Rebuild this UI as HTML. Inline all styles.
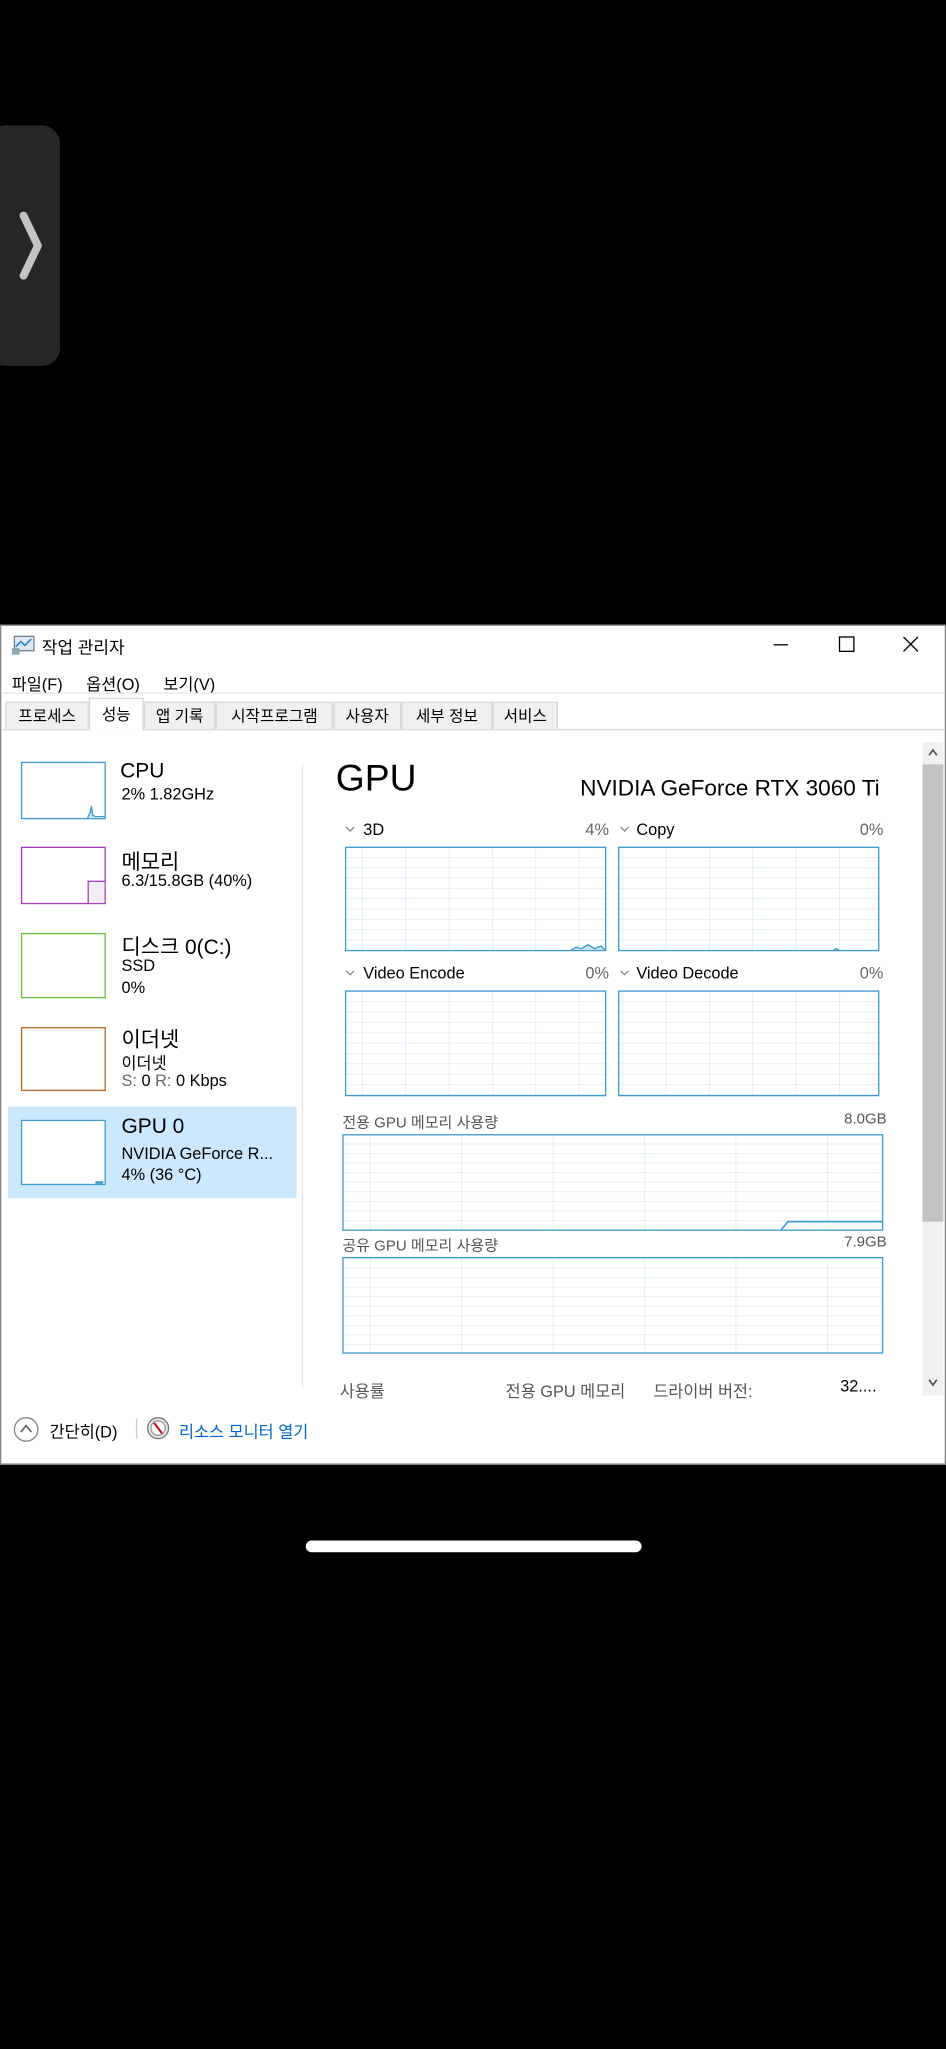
<!DOCTYPE html>
<html><head><meta charset="utf-8"><style>
html,body{margin:0;padding:0;background:#000;width:946px;height:2048px;overflow:hidden}
#s{position:absolute;left:0;top:0;width:724px;height:1568px;transform:scale(1.30663);transform-origin:0 0;font-family:"Liberation Sans","Noto Sans CJK KR",sans-serif;color:#000}
.a{position:absolute;white-space:nowrap}
.win{position:absolute;left:0;top:478px;width:722px;height:641px;background:#fff;border:1px solid #888}
.tab{position:absolute;top:537px;height:21px;font-size:12px;line-height:21px;text-align:center;background:#f0f0f0;border:1px solid #d9d9d9;border-bottom:none;box-sizing:border-box}
.th{position:absolute;left:16px;width:65px;box-sizing:border-box;border:1px solid;background:#fff}
.t1{font-size:16px}.t2{font-size:12.5px}
.lab{font-size:12.5px;color:#000}
.gray{color:#666}
</style></head><body><div id="s">
<div style="position:absolute;left:-10px;top:96px;width:56px;height:184px;background:#262626;border-radius:14px"></div>
<svg class="a" style="left:0;top:0" width="60" height="300"><polyline points="18,165 29,188 18,211" fill="none" stroke="#c4c4c8" stroke-width="6" stroke-linecap="round" stroke-linejoin="round"/></svg>

<div class="win"></div>
<svg class="a" style="left:9px;top:486px" width="18" height="16"><rect x="2" y="1" width="15" height="11" fill="#dfe8f0" stroke="#6a7f94"/><polyline points="3,9 7,5 10,8 15,3" fill="none" stroke="#2a8ad0" stroke-width="1.3"/><rect x="0" y="10" width="6" height="5" fill="#8aa"/></svg>
<div class="a" style="left:32px;top:485px;font-size:13px">작업 관리자</div>
<div class="a" style="left:592px;top:493px;width:11px;height:1px;background:#000"></div>
<div class="a" style="left:642px;top:487px;width:10px;height:10px;border:1px solid #000"></div>
<svg class="a" style="left:691px;top:487px" width="12" height="12"><path d="M0.5 0.5L11.5 11.5M11.5 0.5L0.5 11.5" stroke="#000" stroke-width="1"/></svg>
<div class="a" style="left:9px;top:513px;font-size:12.5px">파일(F)</div>
<div class="a" style="left:66px;top:513px;font-size:12.5px">옵션(O)</div>
<div class="a" style="left:125px;top:513px;font-size:12.5px">보기(V)</div>
<div class="a" style="left:1px;top:530px;width:722px;height:1px;background:#e5e5e5"></div>
<div class="a" style="left:1px;top:558px;width:722px;height:1px;background:#d9d9d9"></div>
<div class="tab" style="left:4px;width:64px">프로세스</div>
<div class="tab" style="left:68px;width:42px;top:534px;height:25px;background:#fff;line-height:24px">성능</div>
<div class="tab" style="left:110px;width:55px">앱 기록</div>
<div class="tab" style="left:165px;width:90px">시작프로그램</div>
<div class="tab" style="left:255px;width:52px">사용자</div>
<div class="tab" style="left:307px;width:70px">세부 정보</div>
<div class="tab" style="left:377px;width:50px">서비스</div>

<div class="a" style="left:231px;top:585px;width:1px;height:477px;background:#e3e3e3"></div>
<div class="th" style="top:583px;height:44px;border-color:#3c9bd0"><svg width="63" height="42" style="position:absolute;left:0;top:0"><polyline points="50,42 52,38 53,33 54,40 56,41 63,41" fill="#cde4f3" stroke="#3c9bd0"/></svg></div>
<div class="a t1" style="left:92px;top:582px">CPU</div>
<div class="a t2" style="left:93px;top:601px">2% 1.82GHz</div>
<div class="th" style="top:648px;height:44px;border-color:#a53cc0"><div style="position:absolute;right:0;bottom:0;width:12px;height:16px;border-left:1px solid #a53cc0;border-top:1px solid #a53cc0;background:#f0eef2"></div></div>
<div class="a t1" style="left:93px;top:646px">메모리</div>
<div class="a t2" style="left:93px;top:667px">6.3/15.8GB (40%)</div>
<div class="th" style="top:714px;height:50px;border-color:#6abf3d"></div>
<div class="a t1" style="left:93px;top:711px">디스크 0(C:)</div>
<div class="a t2" style="left:93px;top:732px">SSD</div>
<div class="a t2" style="left:93px;top:749px">0%</div>
<div class="th" style="top:786px;height:49px;border-color:#b86a2a"></div>
<div class="a t1" style="left:93px;top:782px">이더넷</div>
<div class="a t2" style="left:93px;top:803px">이더넷</div>
<div class="a t2" style="left:93px;top:820px"><span class="gray">S:</span> 0 <span class="gray">R:</span> 0 Kbps</div>
<div class="a" style="left:6px;top:847px;width:221px;height:70px;background:#cce8ff"></div>
<div class="th" style="top:857px;height:50px;border-color:#3c9bd0"><div style="position:absolute;right:1px;bottom:0;width:6px;height:2px;background:#3c9bd0"></div></div>
<div class="a t1" style="left:93px;top:854px">GPU 0</div>
<div class="a t2" style="left:93px;top:876px">NVIDIA GeForce R...</div>
<div class="a t2" style="left:93px;top:892px">4% (36 °C)</div>

<div class="a" style="left:257px;top:580px;font-size:28.5px">GPU</div>
<div class="a" style="left:444px;top:593px;font-size:17.3px">NVIDIA GeForce RTX 3060 Ti</div>

<svg class="a" style="left:0;top:0" width="724" height="1100">
<defs>
<pattern id="g1" width="33.2" height="7.9" patternUnits="userSpaceOnUse" x="277" y="648"><path d="M0 0V7.9M0 0H33.2" stroke="#d6e8f5" stroke-width="1" fill="none"/></pattern>
<pattern id="g2" width="70" height="7.3" patternUnits="userSpaceOnUse" x="283" y="868"><path d="M0 0V7.3M0 0H70" stroke="#d6e8f5" stroke-width="1" fill="none"/></pattern>
</defs>
<g fill="url(#g1)" stroke="#3c9bd0" stroke-width="1">
<rect x="264.5" y="648.5" width="199" height="79"/>
<rect x="473.5" y="648.5" width="199" height="79"/>
<rect x="264.5" y="758.5" width="199" height="80"/>
<rect x="473.5" y="758.5" width="199" height="80"/>
</g>
<g fill="url(#g2)" stroke="#3c9bd0" stroke-width="1">
<rect x="262.5" y="868.5" width="413" height="73"/>
<rect x="262.5" y="962.5" width="413" height="73"/>
</g>
<polyline points="437,727 441,725 445,726 450,723 455,726 460,724 463,727" fill="#cde4f3" stroke="#3c9bd0"/>
<polyline points="638,727 640,726 642,727" fill="none" stroke="#3c9bd0"/>
<polyline points="598,941 603,935 676,935" fill="none" stroke="#3c9bd0" stroke-width="1.2"/>
<g fill="none" stroke="#888" stroke-width="1"><polyline points="265,633 268,636 271,633"/><polyline points="475,633 478,636 481,633"/><polyline points="265,743 268,746 271,743"/><polyline points="475,743 478,746 481,743"/></g>
</svg>
<div class="a lab" style="left:278px;top:628px">3D</div>
<div class="a lab gray" style="left:448px;top:628px">4%</div>
<div class="a lab" style="left:487px;top:628px">Copy</div>
<div class="a lab gray" style="left:658px;top:628px">0%</div>
<div class="a lab" style="left:278px;top:738px">Video Encode</div>
<div class="a lab gray" style="left:448px;top:738px">0%</div>
<div class="a lab" style="left:487px;top:738px">Video Decode</div>
<div class="a lab gray" style="left:658px;top:738px">0%</div>
<div class="a" style="left:262px;top:851px;font-size:11.5px;color:#555">전용 GPU 메모리 사용량</div>
<div class="a" style="left:646px;top:851px;font-size:11.5px;color:#555">8.0GB</div>
<div class="a" style="left:262px;top:945px;font-size:11.5px;color:#555">공유 GPU 메모리 사용량</div>
<div class="a" style="left:646px;top:945px;font-size:11.5px;color:#555">7.9GB</div>
<div class="a" style="left:260px;top:1054px;font-size:12.5px;color:#555">사용률</div>
<div class="a" style="left:387px;top:1054px;font-size:12.5px;color:#555">전용 GPU 메모리</div>
<div class="a" style="left:500px;top:1054px;font-size:12.5px;color:#555">드라이버 버전:</div>
<div class="a" style="left:643px;top:1054px;font-size:12.5px">32....</div>

<div class="a" style="left:706px;top:568px;width:16px;height:500px;background:#f0f0f0"></div>
<div class="a" style="left:706px;top:585px;width:16px;height:350px;background:#c2c2c2"></div>
<svg class="a" style="left:706px;top:568px" width="16" height="500"><polyline points="5,10 8,6 11,10" fill="none" stroke="#555" stroke-width="1.3"/><polyline points="5,488 8,492 11,488" fill="none" stroke="#555" stroke-width="1.3"/></svg>

<svg class="a" style="left:10px;top:1084px" width="22" height="20"><circle cx="10" cy="10" r="9" fill="none" stroke="#888"/><polyline points="6,12 10,7 14,12" fill="none" stroke="#555" stroke-width="1.2"/></svg>
<div class="a" style="left:38px;top:1085px;font-size:12.5px">간단히(D)</div>
<div class="a" style="left:104px;top:1086px;width:1px;height:15px;background:#ccc"></div>
<svg class="a" style="left:112px;top:1084px" width="18" height="18"><circle cx="9" cy="9" r="8" fill="#e8e8e8" stroke="#777"/><circle cx="9" cy="9" r="5.5" fill="#fff" stroke="#999"/><line x1="6" y1="5" x2="12" y2="13" stroke="#c00" stroke-width="1.5"/></svg>
<div class="a" style="left:137px;top:1085px;font-size:12.5px;color:#0066cc">리소스 모니터 열기</div>

<div class="a" style="left:234px;top:1179px;width:257px;height:9px;border-radius:5px;background:#fff"></div>
</div></body></html>
